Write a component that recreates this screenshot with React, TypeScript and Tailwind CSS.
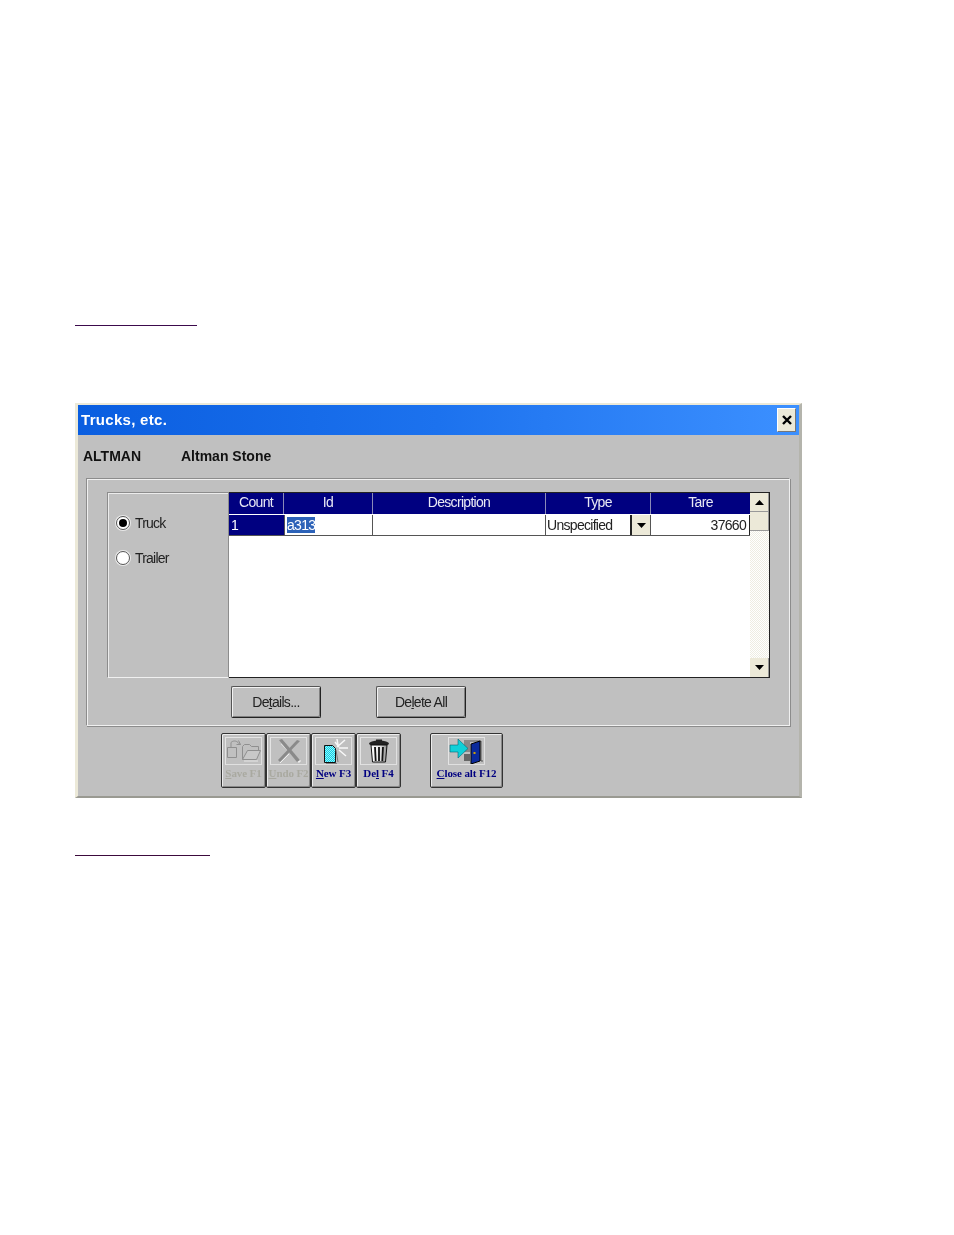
import type { ReactNode } from "react";

const ui = "font-['Liberation_Sans',Arial,sans-serif]";

const columns = [
  { label: "Count", width: "w-[55px]" },
  { label: "Id", width: "w-[89px]" },
  { label: "Description", width: "w-[173px]" },
  { label: "Type", width: "w-[105px]" },
  { label: "Tare", width: "w-[99px]" },
];

function Radio({ checked, label }: { checked?: boolean; label: string }) {
  return (
    <label className="flex items-center gap-[5px] text-[14px] leading-none tracking-[-0.8px] text-[#222]">
      <span className="flex h-[14px] w-[14px] items-center justify-center rounded-full border border-[#555] bg-white shadow-[0_0_0_1px_#e8e8e8]">
        {checked && <span className="h-[8px] w-[8px] rounded-full bg-black" />}
      </span>
      {label}
    </label>
  );
}

function PushButton({ children }: { children: ReactNode }) {
  return (
    <button className="flex h-[32px] w-[90px] items-center justify-center rounded-[2px] border border-[#222] border-t-[#555] border-l-[#555] bg-[#c0c0c0] text-[14px] tracking-[-0.7px] text-[#222] shadow-[inset_1px_1px_0_#f2f2f2,inset_-1px_-1px_0_#808080]">
      {children}
    </button>
  );
}

function ToolButton({
  icon,
  label,
  disabled,
  width = "w-[45px]",
}: {
  icon: ReactNode;
  label: ReactNode;
  disabled?: boolean;
  width?: string;
}) {
  return (
    <div
      className={`flex h-[55px] ${width} flex-col items-center rounded-[2px] border border-[#333] bg-[#c0c0c0] pt-[3px] shadow-[inset_1px_1px_0_#ececec,inset_-1px_-1px_0_#888]`}
    >
      <div className="flex h-[28px] w-[37px] items-center justify-center border border-t-[#e4e4e4] border-r-[#e0e0e0] border-b-[#e0e0e0] border-l-[#e4e4e4]">
        {icon}
      </div>
      <div
        className={`mt-[1px] whitespace-nowrap font-['Liberation_Serif',serif] text-[11px] leading-[14px] font-bold tracking-[-0.1px] ${
          disabled ? "text-[#a9a9a0]" : "text-[#000080]"
        }`}
      >
        {label}
      </div>
    </div>
  );
}

function SaveIcon() {
  return (
    <svg width="35" height="24" viewBox="0 0 35 24" fill="none" stroke="#8f8f8f" strokeWidth="1">
      <path d="M1.5 8.5h9v10h-9z" />
      <path d="M5 8V3.5c2-2 5-2 7 0l2 2" />
      <path d="M12.5 1.5l2 4h-4" />
      <path d="M16.5 20.5v-13l2-2h5l2 2h7v4" />
      <path d="M16.5 20.5l5-9h13l-4 9z" fill="#c8c8c8" />
      <path d="M18 22h14" stroke="#e6e6e6" />
    </svg>
  );
}

function UndoIcon() {
  return (
    <svg width="30" height="26" viewBox="0 0 30 26" fill="none">
      <path d="M26 24L8 5" stroke="#efefef" strokeWidth="3" />
      <path d="M5 2l3-1 18 21-3 2L8 6z" fill="#8a8a8a" />
      <path d="M26 3L6 24l-2-2L23 2z" fill="#8a8a8a" />
      <path d="M6 25l9-9" stroke="#efefef" />
    </svg>
  );
}

function NewIcon() {
  return (
    <svg width="32" height="26" viewBox="0 0 32 26" fill="none">
      <defs>
        <pattern id="dither" width="2" height="2" patternUnits="userSpaceOnUse">
          <rect width="2" height="2" fill="#10d0e4" />
          <rect width="1" height="1" fill="#90f4fc" />
          <rect x="1" y="1" width="1" height="1" fill="#90f4fc" />
        </pattern>
      </defs>
      <path d="M6.5 7.5h8l3 3v14h-11z" fill="url(#dither)" stroke="#111" />
      <path d="M19 9l8-7M21 10h9M20 7l-1-6M21 12l7 6M17 4l4 5" stroke="#f8f8f8" strokeWidth="1.5" />
      <path d="M18 12l2 12" stroke="#777" />
      <path d="M8 25.5h11" stroke="#808080" />
    </svg>
  );
}

function DelIcon() {
  return (
    <svg width="22" height="24" viewBox="0 0 22 24" fill="none">
      <defs>
        <linearGradient id="can" x1="0" x2="1" y1="0" y2="0">
          <stop offset="0" stopColor="#ffffff" />
          <stop offset="0.55" stopColor="#e8e8e8" />
          <stop offset="1" stopColor="#8a8a8a" />
        </linearGradient>
      </defs>
      <ellipse cx="11" cy="4.5" rx="10" ry="3" fill="#222" />
      <path d="M8 1.5h6" stroke="#222" strokeWidth="2" />
      <path d="M3 6h16l-1.5 17h-13z" fill="url(#can)" stroke="#111" />
      <path d="M7 8l.7 14M11 8v14M15 8l-.7 14" stroke="#111" strokeWidth="1.8" />
    </svg>
  );
}

function CloseIcon() {
  return (
    <svg width="35" height="26" viewBox="0 0 35 26" fill="none">
      <path d="M15 3h17v20h2" stroke="#555" />
      <path d="M15 4h6v10h-6z" fill="#888" />
      <path d="M15 16h6v7h-6z" fill="#666" />
      <path d="M22 6l9-3v20l-9 3z" fill="#0a2a9c" stroke="#000" />
      <path d="M24.5 14h2v2h-2z" fill="#d0a000" />
      <path d="M1 7h8V1l10 9.5L9 20v-6H1z" fill="#10d0d8" stroke="#067" strokeWidth="0.6" />
    </svg>
  );
}

export default function App() {
  return (
    <div className={`${ui} h-[1235px] w-[954px] overflow-hidden bg-white pt-[325px] pl-[75px]`}>
      <div className="h-[1px] w-[122px] bg-[#3c0a4c]" />

      <div className="mt-[77px] flex h-[395px] w-[727px] flex-col border-[2px] border-x-[3px] border-t-[#ece9d8] border-r-[#b4b4ac] border-b-[#9a9a92] border-l-[#ece9d8] bg-[#c0c0c0] blur-[0.3px]">
        {/* title bar */}
        <div className="flex h-[30px] shrink-0 items-center justify-between bg-gradient-to-r from-[#0a5ee0] via-[#1c72ee] to-[#3c90ff] px-[3px]">
          <span className="text-[15px] font-bold tracking-[0.3px] text-white">Trucks, etc.</span>
          <span className="flex h-[24px] w-[19px] items-center justify-center border border-t-white border-r-[#777] border-b-[#777] border-l-white bg-[#ece9d8]">
            <svg width="10" height="10" viewBox="0 0 10 10">
              <path d="M1 1l8 8M9 1l-8 8" stroke="#000" strokeWidth="2.4" />
            </svg>
          </span>
        </div>

        {/* customer */}
        <div className="flex h-[43px] shrink-0 items-center pl-[5px] text-[14px] font-bold text-[#111]">
          <span className="w-[98px]">ALTMAN</span>
          <span>Altman Stone</span>
        </div>

        {/* group box */}
        <div className="ml-[8px] h-[248px] w-[704px] shrink-0 border border-t-[#8c8c8c] border-r-[#f0f0f0] border-b-[#f0f0f0] border-l-[#8c8c8c] pt-[13px] pl-[20px] shadow-[inset_1px_1px_0_#f0f0f0,1px_1px_0_#8c8c8c]">
          <div className="flex h-[186px]">
            <div className="flex h-full w-[122px] flex-col gap-[21px] border border-t-[#8c8c8c] border-r-[#8c8c8c] border-b-[#f0f0f0] border-l-[#8c8c8c] pt-[23px] pl-[8px] shadow-[inset_1px_1px_0_#ececec]">
              <Radio checked label="Truck" />
              <Radio label="Trailer" />
            </div>

            {/* grid */}
            <div className="flex h-full w-[541px] border-t border-r border-b border-[#222] bg-white">
              <div className="flex w-[521px] flex-col">
                <div className="flex h-[21px] bg-[#000080]">
                  {columns.map((c) => (
                    <div
                      key={c.label}
                      className={`${c.width} border-r border-[#8a8ab8] text-center text-[14px] leading-[19px] tracking-[-0.7px] text-[#e8e8f4] last:border-r-0`}
                    >
                      {c.label}
                    </div>
                  ))}
                </div>
                <div className="mt-[1px] flex h-[21px] border-b border-[#555] text-[14px] leading-[20px] tracking-[-0.7px] text-[#222]">
                  <div className="w-[55px] bg-[#000080] pl-[2px] text-white">1</div>
                  <div className="w-[89px] border-r border-l border-[#555] pl-[2px]">
                    <span className="bg-[#2c62b8] text-white">a313</span>
                  </div>
                  <div className="w-[173px] border-r border-[#555]" />
                  <div className="flex w-[105px] justify-between border-r border-[#555] pl-[1px]">
                    <span className="leading-[21px]">Unspecified</span>
                    <span className="flex w-[20px] items-center justify-center border-l-[2px] border-[#222] bg-[#ece9d8]">
                      <svg width="9" height="5" viewBox="0 0 9 5">
                        <path d="M0 0h9L4.5 5z" fill="#000" />
                      </svg>
                    </span>
                  </div>
                  <div className="w-[99px] border-r border-[#222] pr-[3px] text-right">37660</div>
                </div>
              </div>
              <div className="flex w-[19px] flex-col justify-between bg-[repeating-conic-gradient(#eeede2_0_25%,#ffffff_0_50%)] bg-[length:2px_2px]">
                <div>
                  <div className="flex h-[19px] items-center justify-center border-r border-b border-[#999] bg-[#ece9d8]">
                    <svg width="9" height="5" viewBox="0 0 9 5">
                      <path d="M4.5 0L9 5H0z" fill="#000" />
                    </svg>
                  </div>
                  <div className="h-[19px] border-r border-b border-[#999] bg-[#ece9d8]" />
                </div>
                <div className="flex h-[19px] items-center justify-center border-r border-[#999] bg-[#ece9d8]">
                  <svg width="9" height="5" viewBox="0 0 9 5">
                    <path d="M0 0h9L4.5 5z" fill="#000" />
                  </svg>
                </div>
              </div>
            </div>
          </div>

          <div className="mt-[8px] flex gap-[55px] pl-[124px]">
            <PushButton>
              <span>
                De<span className="underline">t</span>ails...
              </span>
            </PushButton>
            <PushButton>
              <span>
                De<span className="underline">l</span>ete All
              </span>
            </PushButton>
          </div>
        </div>

        {/* toolbar */}
        <div className="mt-[7px] flex pl-[143px]">
          <ToolButton
            disabled
            icon={<SaveIcon />}
            label={
              <>
                <span className="underline">S</span>ave F1
              </>
            }
          />
          <ToolButton
            disabled
            icon={<UndoIcon />}
            label={
              <>
                <span className="underline">U</span>ndo F2
              </>
            }
          />
          <ToolButton
            icon={<NewIcon />}
            label={
              <>
                <span className="underline">N</span>ew F3
              </>
            }
          />
          <ToolButton
            icon={<DelIcon />}
            label={
              <>
                De<span className="underline">l</span> F4
              </>
            }
          />
          <div className="ml-[29px]">
            <ToolButton
              icon={<CloseIcon />}
              width="w-[73px]"
              label={
                <>
                  <span className="underline">C</span>lose alt F12
                </>
              }
            />
          </div>
        </div>
      </div>

      <div className="mt-[57px] h-[1px] w-[135px] bg-[#3c0a3c]" />
    </div>
  );
}
